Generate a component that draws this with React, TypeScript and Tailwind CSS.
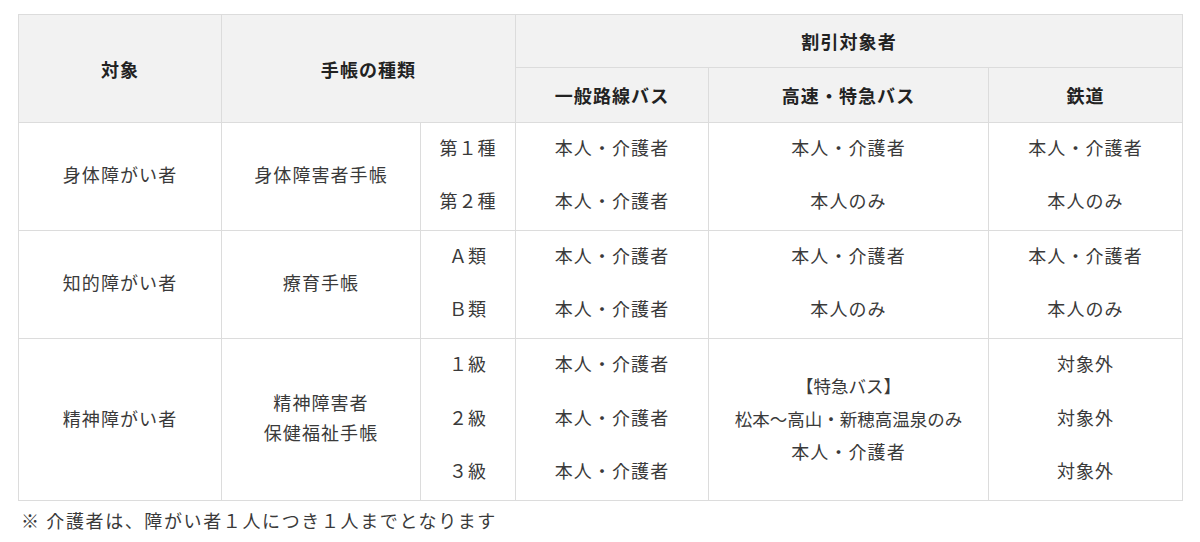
import React from 'react';

const th = 'border border-[#dcdcdc] bg-[#f2f2f2] font-bold text-[#222] text-center align-middle';
const td = 'border border-[#dcdcdc] text-center align-middle';

interface Group {
  target: string;
  book: string;
  grades: string[];
  general: string[];
  express: string[];
  rail: string[];
}

const groups: Group[] = [
  {
    target: '身体障がい者',
    book: '身体障害者手帳',
    grades: ['第１種', '第２種'],
    general: ['本人・介護者', '本人・介護者'],
    express: ['本人・介護者', '本人のみ'],
    rail: ['本人・介護者', '本人のみ'],
  },
  {
    target: '知的障がい者',
    book: '療育手帳',
    grades: ['Ａ類', 'Ｂ類'],
    general: ['本人・介護者', '本人・介護者'],
    express: ['本人・介護者', '本人のみ'],
    rail: ['本人・介護者', '本人のみ'],
  },
];

// interior rows of a group have no horizontal rule between them
const edge = (i: number, n: number) => (i === 0 ? 'border-b-0' : i === n - 1 ? 'border-t-0' : 'border-y-0');

const App: React.FC = () => {
  return (
    <div
      className="bg-white w-[1200px] h-[542px] pt-[14px] px-[18px] text-[#3a3a3a] text-[18px] tracking-[0.06em]"
      style={{ fontFamily: '"Noto Sans CJK JP", "Noto Sans", sans-serif' }}
    >
      <table className="w-[1164px] border-collapse table-fixed leading-[32px]">
        <colgroup>
          <col className="w-[203px]" />
          <col className="w-[199px]" />
          <col className="w-[95px]" />
          <col className="w-[193px]" />
          <col className="w-[280px]" />
          <col className="w-[194px]" />
        </colgroup>
        <thead>
          <tr className="h-[53px]">
            <th rowSpan={2} className={th}>対象</th>
            <th rowSpan={2} colSpan={2} className={th}>手帳の種類</th>
            <th colSpan={3} className={th}>割引対象者</th>
          </tr>
          <tr className="h-[55px]">
            <th className={th}>一般路線バス</th>
            <th className={th}>高速・特急バス</th>
            <th className={th}>鉄道</th>
          </tr>
        </thead>
        <tbody>
          {groups.map((g, gi) =>
            g.grades.map((grade, i) => (
              <tr key={`${gi}-${i}`} className="h-[54px]">
                {i === 0 && (
                  <>
                    <td rowSpan={2} className={`${td} pb-[6px]`}>{g.target}</td>
                    <td rowSpan={2} className={`${td} pb-[6px]`}>{g.book}</td>
                  </>
                )}
                <td className={`${td} ${edge(i, 2)} pb-[6px]`}>{grade}</td>
                <td className={`${td} ${edge(i, 2)} pb-[6px]`}>{g.general[i]}</td>
                <td className={`${td} ${edge(i, 2)} pb-[6px]`}>{g.express[i]}</td>
                <td className={`${td} ${edge(i, 2)} pb-[6px]`}>{g.rail[i]}</td>
              </tr>
            ))
          )}
          {['１級', '２級', '３級'].map((grade, i) => (
            <tr key={`m-${i}`} className="h-[54px]">
              {i === 0 && (
                <>
                  <td rowSpan={3} className={`${td} pb-[4px]`}>精神障がい者</td>
                  <td rowSpan={3} className={`${td} pb-[6px] leading-[30px]`}>
                    精神障害者
                    <br />
                    保健福祉手帳
                  </td>
                </>
              )}
              <td className={`${td} ${edge(i, 3)} pb-[6px]`}>{grade}</td>
              <td className={`${td} ${edge(i, 3)} pb-[6px]`}>本人・介護者</td>
              {i === 0 && (
                <td rowSpan={3} className={`${td} pb-[4px]`}>
                  <span className="text-[17.5px] tracking-normal">
                    【特急バス】
                    <br />
                    松本～高山・新穂高温泉のみ
                  </span>
                  <br />
                  本人・介護者
                </td>
              )}
              <td className={`${td} ${edge(i, 3)} pb-[6px]`}>対象外</td>
            </tr>
          ))}
        </tbody>
      </table>
      <p className="mt-[5px] pl-[3px] leading-[28px] tracking-[0.09em]">※ 介護者は、障がい者１人につき１人までとなります</p>
    </div>
  );
};

export default App;
